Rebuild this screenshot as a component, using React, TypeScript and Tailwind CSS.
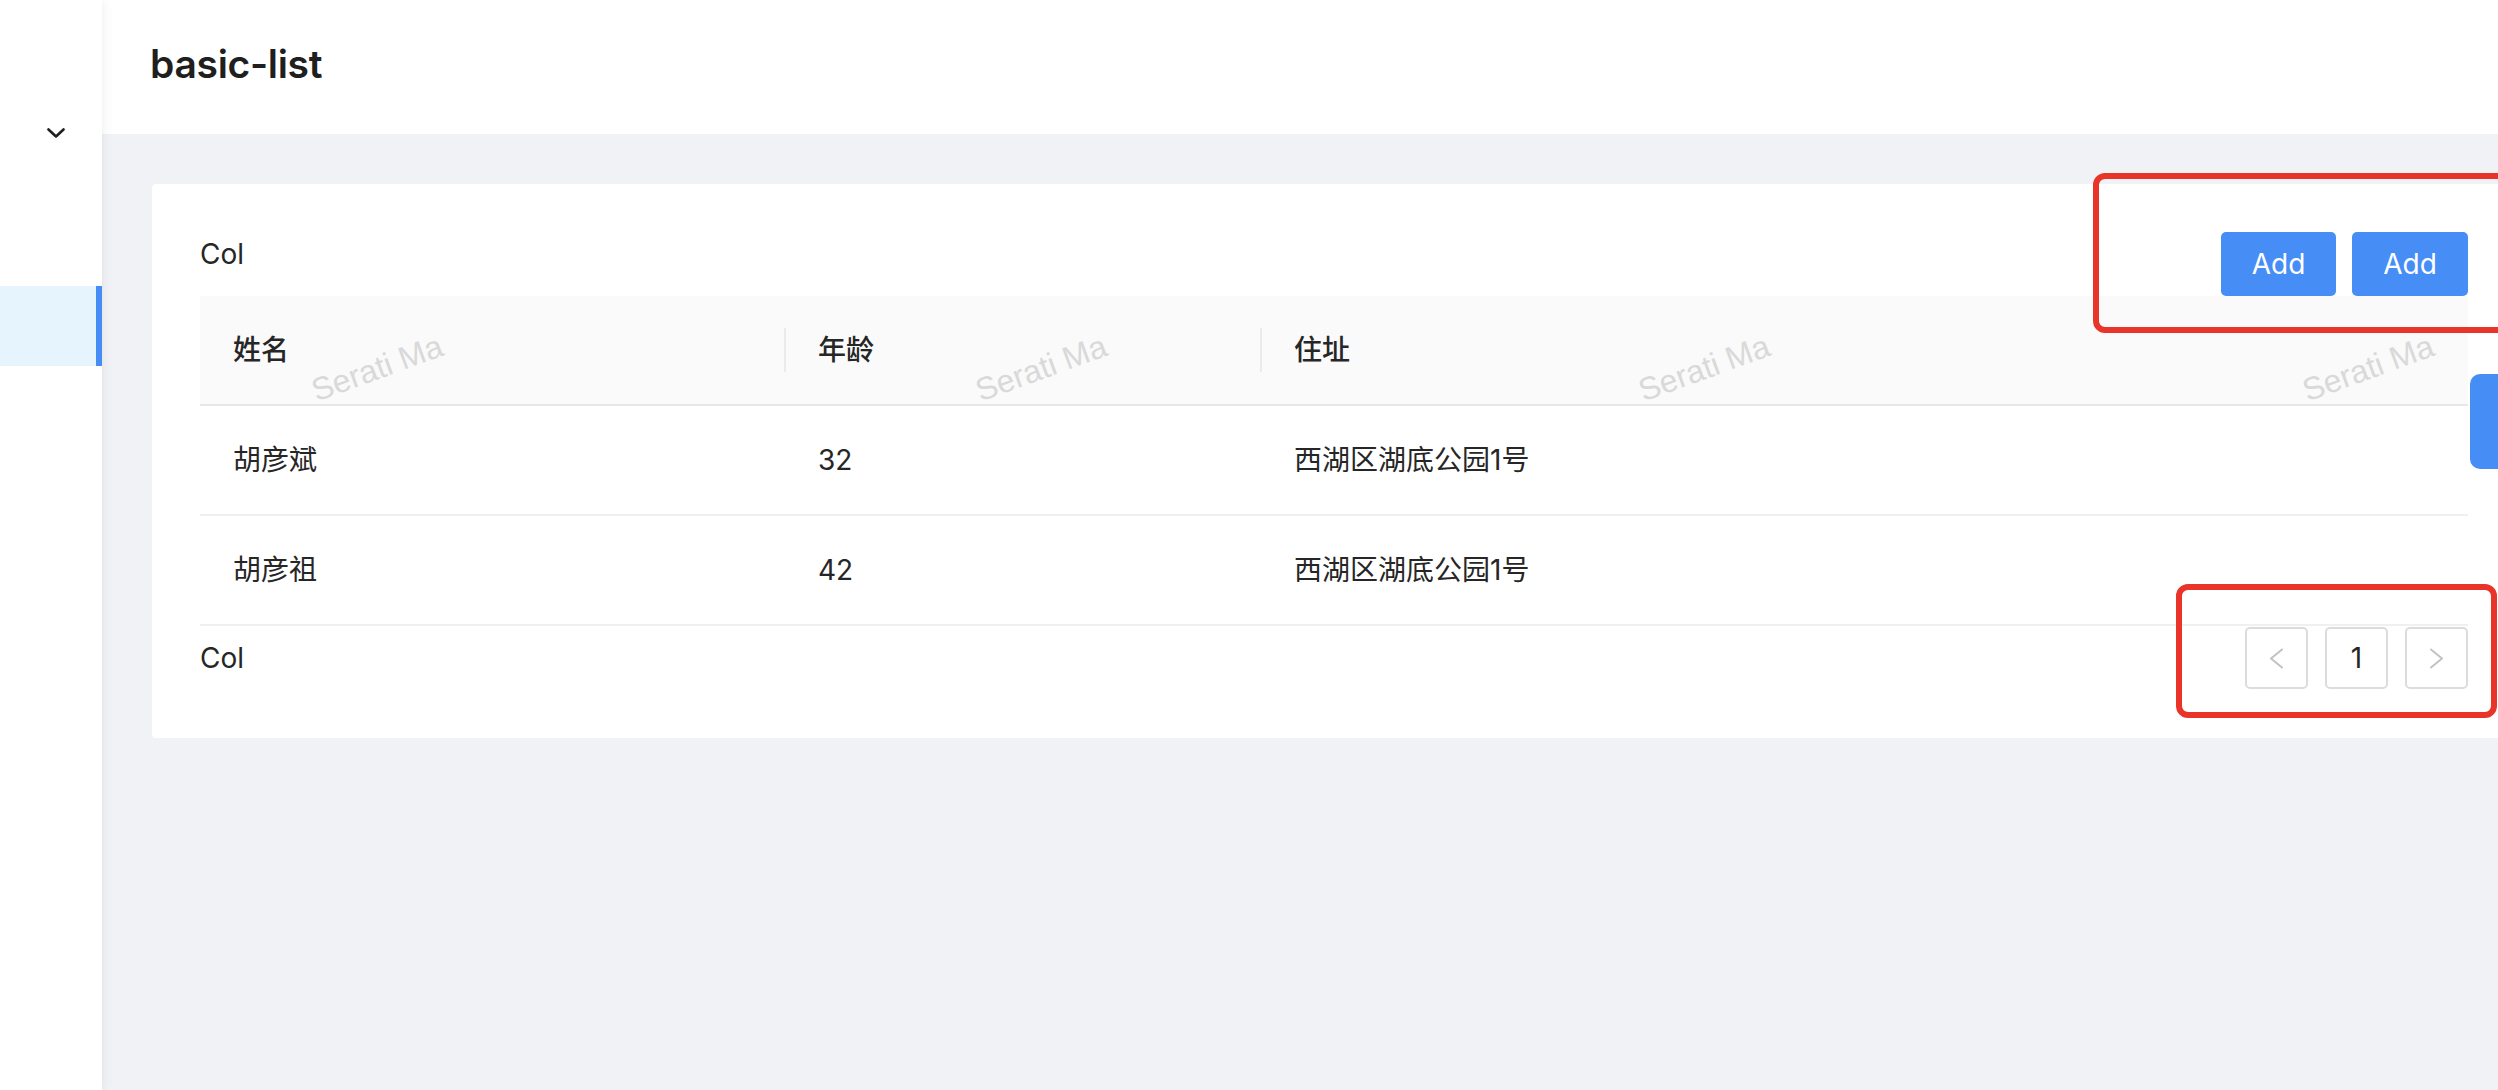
const FONT = { fontFamily: 'Inter, "Liberation Sans", "Noto Sans CJK SC", sans-serif' };

const rows = [
    { name: '胡彦斌', age: 32, address: '西湖区湖底公园1号' },
    { name: '胡彦祖', age: 42, address: '西湖区湖底公园1号' },
];

const watermarks = [
    { key: 'w1', cls: 'left-[377px]' },
    { key: 'w2', cls: 'left-[1041px]' },
    { key: 'w3', cls: 'left-[1704px]' },
    { key: 'w4', cls: 'left-[2368px]' },
];

const dividerCls =
    "relative before:absolute before:left-0 before:top-1/2 before:-translate-y-1/2 before:h-[44px] before:w-[2px] before:bg-[#ebebeb] before:content-['']";

function Sidebar() {
    return (
        <aside className="w-[102px] shrink-0 h-full bg-white relative z-10 shadow-[2px_0_10px_rgba(0,21,41,0.06)] flex flex-col">
            <div className="pt-[128px] pl-[47px]">
                <svg width="18" height="10" viewBox="0 0 18 10" fill="none">
                    <polyline points="1.5,1.5 9,8.5 16.5,1.5" stroke="#1f1f1f" strokeWidth="2.6" strokeLinecap="round" strokeLinejoin="round" />
                </svg>
            </div>
            <div className="mt-[148px] h-[80px] bg-[#e6f4fe] border-r-[6px] border-[#468cf5]" />
        </aside>
    );
}

function Arrow({ dir }: { dir: 'left' | 'right' }) {
    const pts = dir === 'left' ? '13,1.5 2,10.5 13,19.5' : '2,1.5 13,10.5 2,19.5';
    return (
        <svg width="15" height="21" viewBox="0 0 15 21" fill="none">
            <polyline points={pts} stroke="#c2c2c2" strokeWidth="2" strokeLinecap="round" strokeLinejoin="round" />
        </svg>
    );
}

function Pagination() {
    return (
        <div className="flex gap-[17px]">
            <div className="w-[63px] h-[62px] border-2 border-[#dcdcdc] rounded-[5px] flex items-center justify-center">
                <Arrow dir="left" />
            </div>
            <div className="w-[63px] h-[62px] border-2 border-[#dcdcdc] rounded-[5px] flex items-center justify-center text-[28px] text-[#262626]">
                1
            </div>
            <div className="w-[63px] h-[62px] border-2 border-[#dcdcdc] rounded-[5px] flex items-center justify-center">
                <Arrow dir="right" />
            </div>
        </div>
    );
}

export default function App() {
    return (
        <div className="w-[2498px] h-[1090px] overflow-hidden relative flex bg-[#f0f2f5] text-[#262626]" style={FONT}>
            <Sidebar />

            <main className="flex-1 min-w-0 flex flex-col overflow-hidden">
                {/* Page header */}
                <header className="h-[134px] shrink-0 bg-white pl-[48px] pt-[44px]">
                    <h1 className="text-[39px] leading-none font-semibold text-[#1f1f1f] tracking-[-0.3px]">basic-list</h1>
                </header>

                {/* Content */}
                <section className="flex-1 pl-[50px] pt-[50px]">
                    <div className="w-[2364px] bg-white rounded-[4px] px-[48px] pt-[48px] pb-[48px]">
                        <div className="flex items-start justify-between">
                            <span className="text-[28px] leading-[44px]">Col</span>
                            <div className="flex gap-[16px]">
                                <button className="w-[115px] h-[64px] rounded-[5px] bg-[#468ef6] text-white text-[28px]">Add</button>
                                <button className="w-[116px] h-[64px] rounded-[5px] bg-[#468ef6] text-white text-[28px]">Add</button>
                            </div>
                        </div>

                        {/* Table */}
                        <div className="grid grid-cols-[584px_476px_1fr] h-[110px] bg-[#fafafa] border-b-2 border-[#e8e8e8] text-[28px] font-medium">
                            <div className="flex items-center pl-[33px]">姓名</div>
                            <div className={`flex items-center pl-[34px] ${dividerCls}`}>年龄</div>
                            <div className={`flex items-center pl-[34px] ${dividerCls}`}>住址</div>
                        </div>
                        {rows.map((r) => (
                            <div key={r.name} className="grid grid-cols-[584px_476px_1fr] h-[110px] border-b-2 border-[#f0f0f0] text-[28px]">
                                <div className="flex items-center pl-[33px]">{r.name}</div>
                                <div className="flex items-center pl-[34px]">{r.age}</div>
                                <div className="flex items-center pl-[34px]">{r.address}</div>
                            </div>
                        ))}

                        <div className="h-[64px] flex items-center justify-between">
                            <span className="text-[28px] leading-[44px]">Col</span>
                            <Pagination />
                        </div>
                    </div>
                </section>
            </main>

            {/* Watermark */}
            {watermarks.map((w) => (
                <div
                    key={w.key}
                    className={`absolute top-[368px] ${w.cls} -translate-x-1/2 -translate-y-1/2 -rotate-[20deg] text-[32px] text-[#d9d9d9] whitespace-nowrap pointer-events-none`}
                    style={{ fontFamily: '"Liberation Sans", sans-serif' }}
                >
                    Serati Ma
                </div>
            ))}

            {/* Floating handle */}
            <div className="absolute left-[2470px] top-[374px] w-[40px] h-[95px] rounded-l-[10px] bg-[#468ef6]" />

            {/* Annotation boxes */}
            <div className="absolute left-[2093px] top-[173px] w-[430px] h-[160px] border-[6px] border-[#e9342a] rounded-[12px] pointer-events-none" />
            <div className="absolute left-[2176px] top-[584px] w-[321px] h-[134px] border-[6px] border-[#e9342a] rounded-[12px] pointer-events-none" />
        </div>
    );
}
